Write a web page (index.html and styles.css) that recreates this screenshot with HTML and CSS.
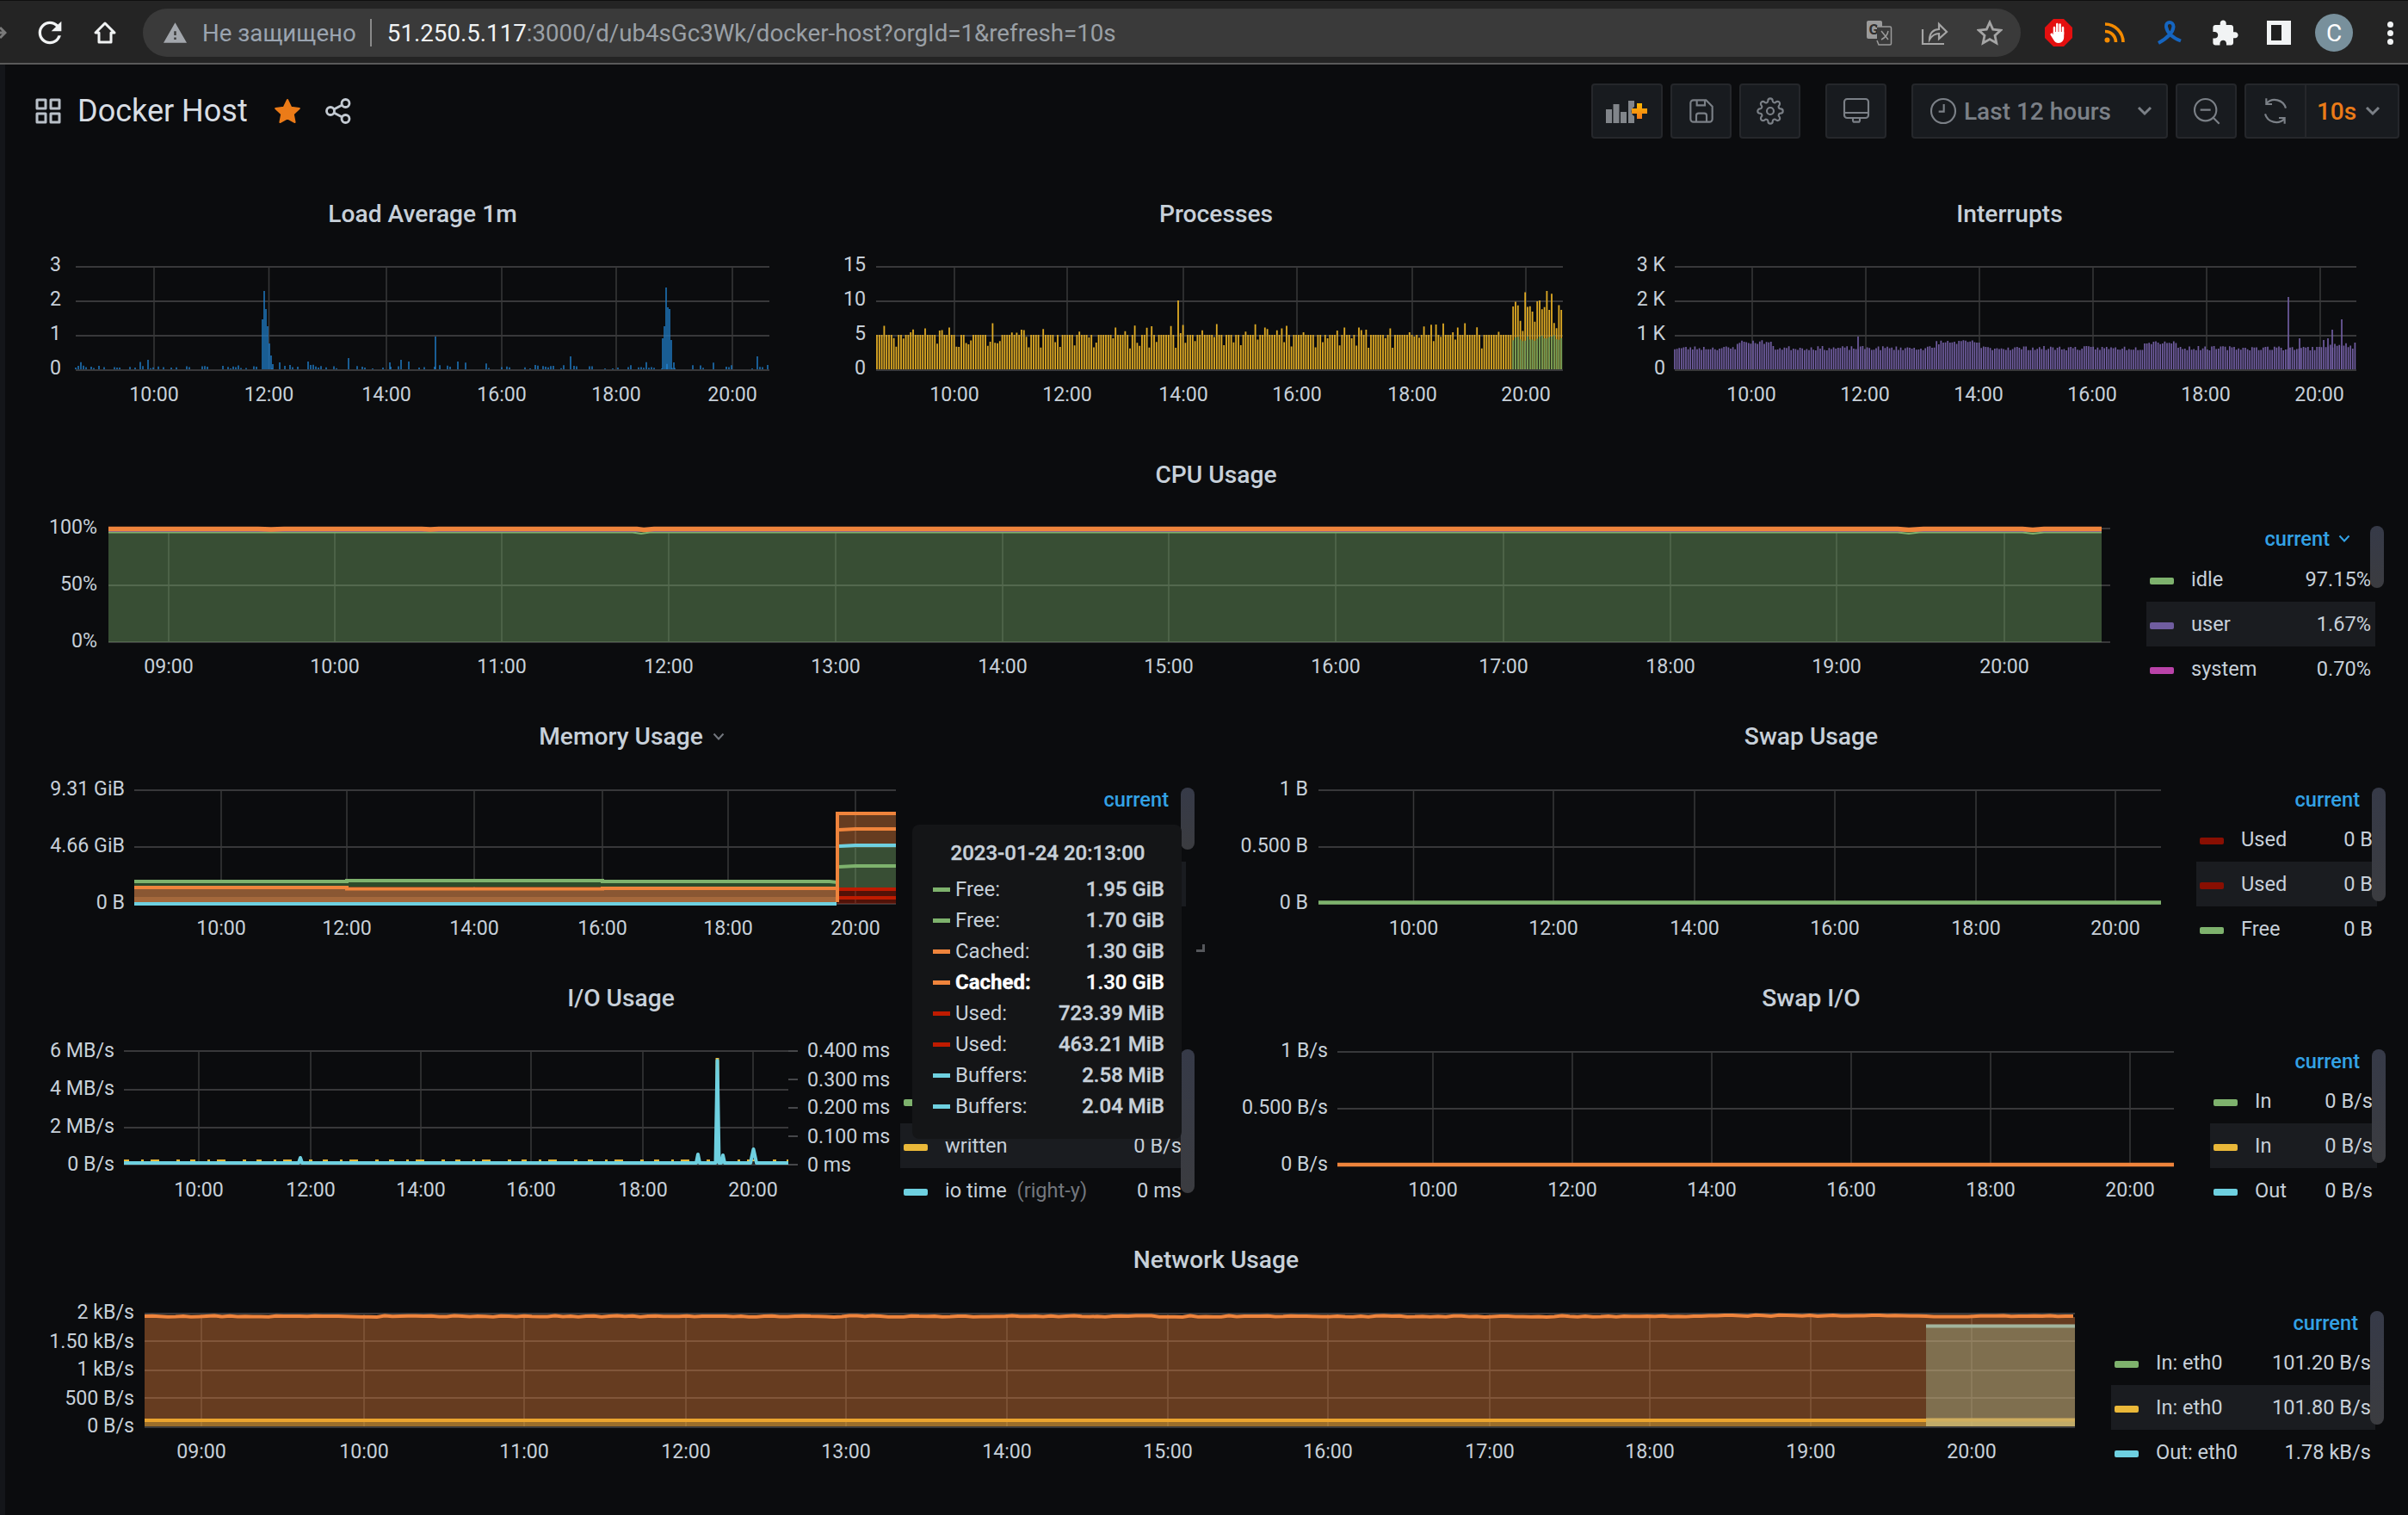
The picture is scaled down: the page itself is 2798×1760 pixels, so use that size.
FILE: index.html
```html
<!DOCTYPE html>
<html lang="ru">
<head>
<meta charset="utf-8">
<title>Docker Host</title>
<link rel="stylesheet" href="styles.css">
</head>
<body>
<div class="browser">
  <div class="browser-nav">
    <svg class="ico-forward" width="8" height="24" viewBox="0 25 8 24"><path d="M-6 37H5M0 31l6 6-6 6" fill="none" stroke="#7a7a7a" stroke-width="3"/></svg>
    <svg class="ico-reload" width="40" height="40" viewBox="0 0 24 24"><path fill="#f1f3f4" d="M17.65 6.35A7.958 7.958 0 0 0 12 4c-4.42 0-7.99 3.58-7.99 8s3.57 8 7.99 8c3.73 0 6.84-2.55 7.73-6h-2.08A5.99 5.99 0 0 1 12 18c-3.31 0-6-2.69-6-6s2.69-6 6-6c1.66 0 3.14.69 4.22 1.78L13 11h7V4l-2.35 2.35z"/></svg>
    <svg class="ico-home" width="28" height="28" viewBox="0 0 28 28"><path d="M14 3 3 14h4v11h14V14h4z" fill="none" stroke="#f1f3f4" stroke-width="3" stroke-linejoin="round"/></svg>
  </div>
  <div class="omnibox">
    <svg class="ico-warn" width="27" height="24" viewBox="1 2 22 19"><path fill="#a3a7ad" d="M1 21h22L12 2 1 21zm12-3h-2v-2h2v2zm0-4h-2v-4h2v4z"/></svg>
    <span class="omni-warn">Не защищено</span>
    <span class="omni-sep"></span>
    <span class="omni-url"><b>51.250.5.117</b>:3000/d/ub4sGc3Wk/docker-host?orgId=1&amp;refresh=10s</span>
    <span class="omni-actions">
      <svg width="30" height="30" viewBox="0 0 30 30"><rect x="0" y="1" width="18" height="21" rx="2" fill="#9b9b9b"/><text class="glyph-g" x="2.5" y="17">G</text><path d="M12 8h15a1.5 1.5 0 0 1 1.5 1.5v18a1.5 1.5 0 0 1-1.500 1.500H14l-2-5" fill="#3a3a3a" stroke="#9b9b9b" stroke-width="1.500"/><path d="M17 13l8 10M25 13c-1 5-4 8-8 10" fill="none" stroke="#9b9b9b" stroke-width="1.500"/></svg>
      <svg width="32" height="30" viewBox="0 0 32 30"><path d="M2 11v17h25M10 23c0-8 5-12 11-12V5l9 9-9 8v-6c-5 0-8 2-11 7z" fill="none" stroke="#a5a5a5" stroke-width="2.200" stroke-linejoin="miter"/></svg>
      <svg width="30" height="30" viewBox="0 0 30 30"><path d="M15 3l3.700 8.200 8.900 1-6.600 6 1.800 8.800L15 22.500 7.200 27l1.800-8.800-6.600-6 8.900-1z" fill="none" stroke="#a5a5a5" stroke-width="2.800"/></svg>
    </span>
  </div>
  <div class="browser-ext">
    <svg class="ext-a" width="32" height="32" viewBox="0 0 32 32"><path fill="#e40f0f" d="M10 0h12l10 10v12L22 32H10L0 22V10z"/><path fill="none" stroke="#fff" stroke-width="2.500" stroke-linecap="round" d="M11 18V10M14.300 16V6M17.600 16V6.500M21 18V10"/><path fill="#fff" d="M9.800 15H22.200V21C22.200 25 19.500 28 16 28 13 28 11.500 26.500 10 24L6.500 18.500C6 17 8 15.800 9 17L10 18.500z"/></svg>
    <svg class="ext-b" width="24" height="24" viewBox="0 0 24 24"><circle cx="3.500" cy="20.500" r="3" fill="#f58b00"/><path d="M1 10.500c7 0 12.500 5.500 12.500 12.500M1 2c11.500 0 21 9.500 21 21" fill="none" stroke="#f58b00" stroke-width="3.600"/></svg>
    <svg class="ext-c" width="32" height="28" viewBox="0 0 32 28"><path d="M3 26C12 21 20 14 20.500 7 20.500 3.500 18 2 16 2 14 2 11.500 3.500 12 7 13 14 20 20 29 23.500" fill="none" stroke="#1565c0" stroke-width="4"/></svg>
    <svg class="ext-d" width="32" height="32" viewBox="1 0 23 23"><path fill="#f1f3f4" d="M20.500 11H19V7c0-1.100-.9-2-2-2h-4V3.500C13 2.120 11.880 1 10.500 1S8 2.120 8 3.500V5H4c-1.100 0-1.990.9-1.990 2v3.800H3.500c1.490 0 2.700 1.210 2.700 2.700s-1.210 2.700-2.700 2.700H2V20c0 1.100.9 2 2 2h3.800v-1.500c0-1.490 1.210-2.700 2.700-2.700 1.490 0 2.700 1.210 2.700 2.700V22H17c1.100 0 2-.9 2-2v-4h1.500c1.380 0 2.500-1.120 2.500-2.500S21.880 11 20.500 11z"/></svg>
    <span class="ext-panel"></span>
    <span class="avatar">C</span>
    <span class="kebab"><i></i><i></i><i></i></span>
  </div>
</div>

<div class="page">
  <header class="topbar">
    <div class="top-left">
      <svg class="ico-grid" width="30" height="30" viewBox="0 0 30 30"><path d="M2 2h10v10H2zM18 2h10v10H18zM2 18h10v10H2zM18 18h10v10H18z" fill="none" stroke="#b9c0c8" stroke-width="3" stroke-linejoin="round"/></svg>
      <h1 class="dash-title">Docker Host</h1>
      <svg class="ico-star" width="32" height="30" viewBox="0 0 32 30"><path fill="#eb7b18" stroke="#eb7b18" stroke-linejoin="round" stroke-width="2" d="M16 2l4.200 8.700 9.600 1.300-7 6.600 1.800 9.400L16 23.400 7.400 28l1.800-9.400-7-6.600 9.600-1.300z"/></svg>
      <svg class="ico-share" width="30" height="30" viewBox="0 0 30 30"><g fill="none" stroke="#c3cad2" stroke-width="2.800"><circle cx="23.500" cy="6" r="4.500"/><circle cx="6" cy="15" r="4.500"/><circle cx="23.500" cy="24" r="4.500"/><path d="M10 13l9.500-5M10 17l9.500 5"/></g></svg>
    </div>
    <div class="top-right">
      <button class="tb tb-add"><svg width="50" height="30" viewBox="0 0 50 30"><defs><linearGradient id="plus" x1="0" x2="0" y1="0" y2="1"><stop offset="0" stop-color="#ffb800"/><stop offset="1" stop-color="#f27a1a"/></linearGradient></defs><path fill="#81858a" d="M0 13h7v16H0zM8.500 7h7v22h-7zM17 16h7v13h-7zM26 3h7v7c-4 2-5 8 0 11v8h-7z"/><path fill="url(#plus)" d="M36 6h6v6h6v6h-6v6h-6v-6H30v-6h6z"/></svg></button>
      <button class="tb"><svg class="ti" width="32" height="32" viewBox="0 0 24 24"><path d="M19 21.500H5a2.500 2.500 0 0 1-2.500-2.500V5A2.500 2.500 0 0 1 5 2.500h11L21.500 8v11a2.500 2.500 0 0 1-2.500 2.500zM8 3v4h7V3M7.500 21v-5a2 2 0 0 1 2-2h5a2 2 0 0 1 2 2v5"/></svg></button>
      <button class="tb"><svg class="ti" width="32" height="32" viewBox="0 0 24 24"><circle cx="12" cy="12" r="3"/><path d="M19.400 15a1.650 1.650 0 0 0 .33 1.820l.06.06a2 2 0 0 1 0 2.830 2 2 0 0 1-2.830 0l-.06-.06a1.650 1.650 0 0 0-1.820-.33 1.650 1.650 0 0 0-1 1.510V21a2 2 0 0 1-2 2 2 2 0 0 1-2-2v-.09A1.650 1.650 0 0 0 9 19.400a1.650 1.650 0 0 0-1.820.33l-.06.06a2 2 0 0 1-2.830 0 2 2 0 0 1 0-2.830l.06-.06a1.650 1.650 0 0 0 .33-1.820 1.650 1.650 0 0 0-1.510-1H3a2 2 0 0 1-2-2 2 2 0 0 1 2-2h.09A1.650 1.650 0 0 0 4.600 9a1.650 1.650 0 0 0-.33-1.820l-.06-.06a2 2 0 0 1 0-2.830 2 2 0 0 1 2.830 0l.06.06a1.650 1.650 0 0 0 1.820.33H9a1.650 1.650 0 0 0 1-1.510V3a2 2 0 0 1 2-2 2 2 0 0 1 2 2v.09a1.650 1.650 0 0 0 1 1.510 1.650 1.650 0 0 0 1.820-.33l.06-.06a2 2 0 0 1 2.830 0 2 2 0 0 1 0 2.830l-.06.06a1.650 1.650 0 0 0-.33 1.820V9a1.650 1.650 0 0 0 1.510 1H21a2 2 0 0 1 2 2 2 2 0 0 1-2 2h-.09a1.650 1.650 0 0 0-1.510 1z"/></svg></button>
      <button class="tb tb-gap"><svg class="ti" width="32" height="32" viewBox="0 0 24 24"><rect x="1.500" y="1.500" width="21" height="16.500" rx="2.500"/><path d="M1.500 13.500h21M9 18v2.200a1.200 1.200 0 0 0 1.200 1.300h3.600a1.200 1.200 0 0 0 1.200-1.300V18"/></svg></button>
      <button class="tb tb-range tb-gap"><svg class="ti" width="32" height="32" viewBox="0 0 24 24"><circle cx="12" cy="12" r="10.500"/><path d="M12.500 6v6.500H8"/></svg><span class="range-text">Last 12 hours</span><svg class="chev chev-end" width="18" height="12" viewBox="0 0 18 12"><path d="M2 2l7 7 7-7"/></svg></button>
      <button class="tb"><svg class="ti" width="32" height="32" viewBox="0 0 24 24"><circle cx="11" cy="11" r="9.500"/><path d="M6.500 11h9M18 18l5 5"/></svg></button>
      <div class="tb-split">
        <button class="tb-part"><svg class="ti" width="32" height="32" viewBox="0 0 24 24"><path d="M4 5.500A10 10 0 0 1 21 9.500M20 18.500A10 10 0 0 1 3 14.500M4 1v5h5M20 23v-5h-5"/></svg></button>
        <button class="tb-part tb-refresh"><span class="refresh-text">10s</span><svg class="chev" width="18" height="12" viewBox="0 0 18 12"><path d="M2 2l7 7 7-7"/></svg></button>
      </div>
    </div>
  </header>

  <main class="dashboard">
    <section class="panel span-2">
      <h2 class="panel-title">Load Average 1m</h2>
      <svg class="chart" width="922" height="244" viewBox="30 278 922 244">
        <path class="grid-h" d="M88 310H894M88 350H894M88 390H894M88 430H894"/>
        <path class="grid-v" d="M179 310V430M312.500 310V430M449 310V430M583 310V430M716 310V430M851 310V430"/>
        <path id="load-bars" class="bars-load"/>
        <g class="tick-y"><text x="71" y="315">3</text><text x="71" y="355">2</text><text x="71" y="395">1</text><text x="71" y="435">0</text></g>
        <g class="tick-x"><text x="179" y="466">10:00</text><text x="312.500" y="466">12:00</text><text x="449" y="466">14:00</text><text x="583" y="466">16:00</text><text x="716" y="466">18:00</text><text x="851" y="466">20:00</text></g>
      </svg>
    </section>
    <section class="panel span-2">
      <h2 class="panel-title">Processes</h2>
      <svg class="chart" width="922" height="244" viewBox="952 278 922 244">
        <path class="grid-h" d="M1018 310H1816M1018 350H1816M1018 390H1816M1018 430H1816"/>
        <path class="grid-v" d="M1109 310V430M1240 310V430M1375 310V430M1507 310V430M1641 310V430M1773 310V430"/>
        <path id="proc-bars" class="bars-proc"/>
        <path id="proc-green" class="bars-green"/>
        <g class="tick-y"><text x="1006" y="315">15</text><text x="1006" y="355">10</text><text x="1006" y="395">5</text><text x="1006" y="435">0</text></g>
        <g class="tick-x"><text x="1109" y="466">10:00</text><text x="1240" y="466">12:00</text><text x="1375" y="466">14:00</text><text x="1507" y="466">16:00</text><text x="1641" y="466">18:00</text><text x="1773" y="466">20:00</text></g>
      </svg>
    </section>
    <section class="panel span-2">
      <h2 class="panel-title">Interrupts</h2>
      <svg class="chart" width="922" height="244" viewBox="1874 278 922 244">
        <path class="grid-h" d="M1946 310H2738M1946 350H2738M1946 390H2738M1946 430H2738"/>
        <path class="grid-v" d="M2036 310V430M2168 310V430M2300 310V430M2432 310V430M2564 310V430M2696 310V430"/>
        <path id="irq-bars" class="bars-irq"/>
        <g class="tick-y"><text x="1935" y="315">3 K</text><text x="1935" y="355">2 K</text><text x="1935" y="395">1 K</text><text x="1935" y="435">0</text></g>
        <g class="tick-x"><text x="2035" y="466">10:00</text><text x="2167" y="466">12:00</text><text x="2299" y="466">14:00</text><text x="2431" y="466">16:00</text><text x="2563" y="466">18:00</text><text x="2695" y="466">20:00</text></g>
      </svg>
    </section>

    <section class="panel span-6">
      <h2 class="panel-title">CPU Usage</h2>
      <div class="panel-body">
        <svg class="chart" width="2460" height="244" viewBox="30 581 2460 244">
          <path class="grid-h" d="M126 614H2452M126 680H2452M126 746H2452"/>
          <path class="grid-v" d="M196 613V746M389 613V746M583 613V746M777 613V746M971 613V746M1165 613V746M1358 613V746M1552 613V746M1747 613V746M1941 613V746M2134 613V746M2329 613V746"/>
          <path class="fill-green" d="M126 617H2442V746H126z"/>
          <path class="line-thin-green" d="M126 618.500H735L745 620 755 618.500H2205L2218 620 2230 618.500H2350L2362 620 2375 618.500H2442"/>
          <path class="line-thin-purple" d="M126 617.200H2442"/>
          <path class="line-orange-cpu" d="M126 614.500H300L315 615 330 614.500H490L500 615 510 614.500H740L748 615.500 760 614.500H2205L2218 615.500 2235 614.500H2350L2362 615.500 2375 614.500H2442"/>
          <g class="tick-y"><text x="113" y="620">100%</text><text x="113" y="686">50%</text><text x="113" y="752">0%</text></g>
          <g class="tick-x"><text x="196" y="782">09:00</text><text x="389" y="782">10:00</text><text x="583" y="782">11:00</text><text x="777" y="782">12:00</text><text x="971" y="782">13:00</text><text x="1165" y="782">14:00</text><text x="1358" y="782">15:00</text><text x="1552" y="782">16:00</text><text x="1747" y="782">17:00</text><text x="1941" y="782">18:00</text><text x="2134" y="782">19:00</text><text x="2329" y="782">20:00</text></g>
        </svg>
        <div class="legend legend-cpu">
          <div class="legend-head legend-head-sort">current<svg class="chev-blue" width="14" height="10" viewBox="0 0 14 10"><path d="M1.500 1.500l5.500 6 5.500-6"/></svg></div>
          <div class="legend-row"><i class="sw c-green"></i><span class="lg-name">idle</span><span>97.15%</span></div>
          <div class="legend-row hover"><i class="sw c-purple"></i><span class="lg-name">user</span><span>1.67%</span></div>
          <div class="legend-row"><i class="sw c-magenta"></i><span class="lg-name">system</span><span>0.70%</span></div>
          <span class="scroll scroll-short"></span>
        </div>
      </div>
    </section>

    <section class="panel span-3">
      <h2 class="panel-title">Memory Usage<svg class="title-chev" width="14" height="10" viewBox="0 0 14 10"><path d="M1.500 1.500l5.500 6 5.500-6"/></svg></h2>
      <div class="panel-body">
        <svg class="chart" width="1032" height="244" viewBox="30 885 1032 244">
          <path class="grid-h" d="M156 918H1041M156 984H1041M156 1050H1041"/>
          <path class="grid-v" d="M257 918V1050M403 918V1050M551 918V1050M700 918V1050M846 918V1050M994 918V1050"/>
          <path class="fill-mem-g" d="M156 1025H973V1030H156z"/>
          <path class="fill-mem-o" d="M156 1033H973V1044H156z"/>
          <path class="fill-mem-o2" d="M156 1042H973V1048H156z"/>
          <path class="mem-line-g" d="M156 1024H403V1023H700V1024H964L973 1025"/>
          <path class="mem-line-o" d="M156 1031H403V1032.500H700V1032H973"/>
          <path class="mem-line-c" d="M156 1050H972"/>
          <path class="fill-orange" d="M973 946H1041V982H973z"/>
          <path class="fill-green" d="M973 982H1041V1032H973z"/>
          <path class="fill-red" d="M973 1032H1041V1050H973z"/>
          <path class="mem-line-r" d="M975 1033H1041M975 1043H1041"/>
          <path class="mem-line-g" d="M975 1007L994 1006H1041"/>
          <path class="mem-line-c" d="M975 983L994 982H1041"/>
          <path class="mem-line-o" d="M973 1048V945H1041M975 964L994 963H1041"/>
          <g class="tick-y"><text x="145" y="924">9.31 GiB</text><text x="145" y="990">4.66 GiB</text><text x="145" y="1056">0 B</text></g>
          <g class="tick-x"><text x="257" y="1086">10:00</text><text x="403" y="1086">12:00</text><text x="551" y="1086">14:00</text><text x="700" y="1086">16:00</text><text x="846" y="1086">18:00</text><text x="994" y="1086">20:00</text></g>
        </svg>
        <div class="legend legend-mem">
          <div class="legend-head">current</div>
          <div class="legend-row"></div>
          <div class="legend-row hover"></div>
          <span class="scroll scroll-short"></span>
        </div>
      </div>
      <span class="resize-handle"></span>
      <div class="tooltip">
        <div class="tip-date">2023-01-24 20:13:00</div>
        <div class="tip-row"><i class="tip-sw c-green"></i><span class="tip-name">Free:</span><b>1.95 GiB</b></div>
        <div class="tip-row"><i class="tip-sw c-green"></i><span class="tip-name">Free:</span><b>1.70 GiB</b></div>
        <div class="tip-row"><i class="tip-sw c-orange"></i><span class="tip-name">Cached:</span><b>1.30 GiB</b></div>
        <div class="tip-row active"><i class="tip-sw c-orange"></i><span class="tip-name">Cached:</span><b>1.30 GiB</b></div>
        <div class="tip-row"><i class="tip-sw c-red"></i><span class="tip-name">Used:</span><b>723.39 MiB</b></div>
        <div class="tip-row"><i class="tip-sw c-red"></i><span class="tip-name">Used:</span><b>463.21 MiB</b></div>
        <div class="tip-row"><i class="tip-sw c-cyan"></i><span class="tip-name">Buffers:</span><b>2.58 MiB</b></div>
        <div class="tip-row"><i class="tip-sw c-cyan"></i><span class="tip-name">Buffers:</span><b>2.04 MiB</b></div>
      </div>
    </section>
    <section class="panel span-3">
      <h2 class="panel-title">Swap Usage</h2>
      <div class="panel-body">
        <svg class="chart" width="1139" height="244" viewBox="1413 885 1139 244">
          <path class="grid-h" d="M1532 918H2511M1532 984H2511M1532 1050H2511"/>
          <path class="grid-v" d="M1642.500 918V1050M1805 918V1050M1969 918V1050M2132 918V1050M2296 918V1050M2458 918V1050"/>
          <path class="line-flat-green" d="M1532 1048.500H2511"/>
          <g class="tick-y"><text x="1520" y="924">1 B</text><text x="1520" y="990">0.500 B</text><text x="1520" y="1056">0 B</text></g>
          <g class="tick-x"><text x="1642.500" y="1086">10:00</text><text x="1805" y="1086">12:00</text><text x="1969" y="1086">14:00</text><text x="2132" y="1086">16:00</text><text x="2296" y="1086">18:00</text><text x="2458" y="1086">20:00</text></g>
        </svg>
        <div class="legend legend-swap">
          <div class="legend-head">current</div>
          <div class="legend-row"><i class="sw c-darkred"></i><span class="lg-name">Used</span><span>0 B</span></div>
          <div class="legend-row hover"><i class="sw c-darkred"></i><span class="lg-name">Used</span><span>0 B</span></div>
          <div class="legend-row"><i class="sw c-green"></i><span class="lg-name">Free</span><span>0 B</span></div>
          <span class="scroll scroll-mid"></span>
        </div>
      </div>
    </section>

    <section class="panel span-3">
      <h2 class="panel-title">I/O Usage</h2>
      <div class="panel-body">
        <svg class="chart" width="1016" height="244" viewBox="30 1189 1016 244">
          <path class="grid-h" d="M144 1221H916M144 1266H916M144 1310H916M144 1353H916"/>
          <path class="grid-v" d="M231 1221V1353M361 1221V1353M489 1221V1353M617 1221V1353M747 1221V1353M875 1221V1353"/>
          <path class="axis-tick" d="M916 1221H927M916 1254H927M916 1287H927M916 1320H927M916 1353H927"/>
          <path class="io-yellow" d="M144 1348H916"/>
          <path class="io-spike-y" d="M833.500 1351V1229"/>
          <path class="io-cyan" d="M144 1351H347L349 1345 351 1351H809L811 1341 813 1351H831.500L833.500 1232 835.500 1351H838L840 1342 842 1351H872L875.500 1335 879 1351H916"/>
          <g class="tick-y"><text x="133" y="1228">6 MB/s</text><text x="133" y="1272">4 MB/s</text><text x="133" y="1316">2 MB/s</text><text x="133" y="1360">0 B/s</text></g>
          <g class="tick-left"><text x="938" y="1228">0.400 ms</text><text x="938" y="1262">0.300 ms</text><text x="938" y="1294">0.200 ms</text><text x="938" y="1328">0.100 ms</text><text x="938" y="1361">0 ms</text></g>
          <g class="tick-x"><text x="231" y="1390">10:00</text><text x="361" y="1390">12:00</text><text x="489" y="1390">14:00</text><text x="617" y="1390">16:00</text><text x="747" y="1390">18:00</text><text x="875" y="1390">20:00</text></g>
        </svg>
        <div class="legend legend-io">
          <div class="legend-head"></div>
          <div class="legend-row"><i class="sw c-green"></i></div>
          <div class="legend-row hover"><i class="sw c-yellow"></i><span class="lg-name">written</span><span>0 B/s</span></div>
          <div class="legend-row"><i class="sw c-cyan"></i><span class="lg-name">io time <em class="axis-note">(right-y)</em></span><span>0 ms</span></div>
          <span class="scroll scroll-long"></span>
        </div>
      </div>
    </section>
    <section class="panel span-3">
      <h2 class="panel-title">Swap I/O</h2>
      <div class="panel-body">
        <svg class="chart" width="1155" height="244" viewBox="1413 1189 1155 244">
          <path class="grid-h" d="M1554 1222H2526M1554 1288H2526M1554 1353H2526"/>
          <path class="grid-v" d="M1665 1222V1353M1827 1222V1353M1989 1222V1353M2151 1222V1353M2313 1222V1353M2475 1222V1353"/>
          <path class="line-flat-orange" d="M1554 1353H2526"/>
          <g class="tick-y"><text x="1543" y="1228">1 B/s</text><text x="1543" y="1294">0.500 B/s</text><text x="1543" y="1360">0 B/s</text></g>
          <g class="tick-x"><text x="1665" y="1390">10:00</text><text x="1827" y="1390">12:00</text><text x="1989" y="1390">14:00</text><text x="2151" y="1390">16:00</text><text x="2313" y="1390">18:00</text><text x="2475" y="1390">20:00</text></g>
        </svg>
        <div class="legend legend-swapio">
          <div class="legend-head">current</div>
          <div class="legend-row"><i class="sw c-green"></i><span class="lg-name">In</span><span>0 B/s</span></div>
          <div class="legend-row hover"><i class="sw c-yellow"></i><span class="lg-name">In</span><span>0 B/s</span></div>
          <div class="legend-row"><i class="sw c-cyan"></i><span class="lg-name">Out</span><span>0 B/s</span></div>
          <span class="scroll scroll-mid"></span>
        </div>
      </div>
    </section>

    <section class="panel span-6">
      <h2 class="panel-title">Network Usage</h2>
      <div class="panel-body">
        <svg class="chart" width="2423" height="244" viewBox="30 1493 2423 244">
          <path class="grid-h" d="M168 1526H2411M168 1558H2411M168 1592H2411M168 1624H2411M168 1658H2411"/>
          <path class="grid-v" d="M234 1525V1658M423 1525V1658M609 1525V1658M797 1525V1658M983 1525V1658M1170 1525V1658M1357 1525V1658M1543 1525V1658M1731 1525V1658M1917 1525V1658M2104 1525V1658M2291 1525V1658"/>
          <path class="fill-orange" d="M168 1530H2411V1657H168z"/>
          <path class="fill-yellow" d="M168 1650H2411V1657H168z"/>
          <path class="fill-net-hi" d="M2238 1540H2411V1657H2238z"/>
          <path class="fill-net-hi2" d="M2238 1649H2411V1657H2238z"/>
          <path class="net-line-g" d="M2238 1540.500H2411"/>
          <path id="net-top" class="net-line-o"/>
          <path class="net-line-y" d="M168 1650H2238"/>
          <path class="net-line-hy" d="M2238 1649.500H2411"/>
          <g class="tick-y"><text x="156" y="1532">2 kB/s</text><text x="156" y="1566">1.50 kB/s</text><text x="156" y="1598">1 kB/s</text><text x="156" y="1632">500 B/s</text><text x="156" y="1664">0 B/s</text></g>
          <g class="tick-x"><text x="234" y="1694">09:00</text><text x="423" y="1694">10:00</text><text x="609" y="1694">11:00</text><text x="797" y="1694">12:00</text><text x="983" y="1694">13:00</text><text x="1170" y="1694">14:00</text><text x="1357" y="1694">15:00</text><text x="1543" y="1694">16:00</text><text x="1731" y="1694">17:00</text><text x="1917" y="1694">18:00</text><text x="2104" y="1694">19:00</text><text x="2291" y="1694">20:00</text></g>
        </svg>
        <div class="legend legend-net">
          <div class="legend-head">current</div>
          <div class="legend-row"><i class="sw c-green"></i><span class="lg-name">In: eth0</span><span>101.20 B/s</span></div>
          <div class="legend-row hover"><i class="sw c-yellow"></i><span class="lg-name">In: eth0</span><span>101.80 B/s</span></div>
          <div class="legend-row"><i class="sw c-cyan"></i><span class="lg-name">Out: eth0</span><span>1.78 kB/s</span></div>
          <span class="scroll scroll-mid"></span>
        </div>
      </div>
    </section>
  </main>
</div>
<script src="charts.js"></script>
</body>
</html>
```
FILE: styles.css
```css
* { box-sizing: border-box; }
html, body { margin: 0; height: 100%; }
body {
  width: 2798px;
  height: 1760px;
  overflow: hidden;
  background: #0b0c0e;
  color: #c7d0d9;
  font-family: Roboto, "Noto Sans", sans-serif;
}

/* browser chrome */
.browser {
  display: flex;
  align-items: center;
  height: 75px;
  padding-top: 2px;
  background: #242424;
  border-top: 1px solid #101010;
  border-bottom: 2px solid #5a5a5a;
}
.browser-nav { display: flex; align-items: center; width: 166px; height: 56px; }
.ico-forward { margin-right: 30px; }
.ico-home { margin-left: 30px; }
.omnibox {
  display: flex;
  align-items: center;
  width: 2182px;
  height: 56px;
  padding-left: 24px;
  background: #3a3a3a;
  border-radius: 28px;
}
.omni-warn { margin-left: 18px; font-size: 27.7px; color: #9aa4b0; white-space: nowrap; }
.omni-sep { width: 2px; height: 32px; margin: 0 18px 0 16px; background: #8a8a8a; }
.omni-url { font-size: 27.7px; color: #9aa0a6; white-space: nowrap; flex: 1; }
.omni-url b { font-weight: 400; color: #f1f3f4; }
.omni-actions { display: flex; align-items: center; gap: 33px; padding-right: 21px; }
.glyph-g { font: 700 17px Roboto, sans-serif; fill: #2e2e2e; }
.browser-ext { display: flex; align-items: center; height: 56px; padding-left: 28px; }
.ext-b { margin-left: 37px; }
.ext-c { margin-left: 36px; }
.ext-d { margin-left: 33px; }
.ext-panel {
  width: 28px; height: 28px; margin-left: 32px;
  border: 5px solid #f1f3f4; border-right-width: 11px;
  background: #1f1f1f;
}
.avatar {
  display: flex; align-items: center; justify-content: center;
  width: 44px; height: 44px; margin-left: 28px;
  border-radius: 50%; background: #78909c; color: #fff; font-size: 28px;
}
.kebab { display: flex; flex-direction: column; gap: 3px; margin-left: 40px; }
.kebab i { display: block; width: 7px; height: 7px; border-radius: 50%; background: #f1f3f4; }

/* page */
.page {
  height: 1685px;
  border-left: 6px solid #14161a;
  padding: 0 2px 0 24px;
}
.topbar {
  display: flex;
  justify-content: space-between;
  height: 143px;
  padding-top: 22px;
}
.top-left { display: flex; align-items: center; height: 64px; padding-left: 11px; }
.dash-title { margin: 0 0 0 19px; font-size: 36px; font-weight: 400; color: #d8dde3; }
.ico-star { margin-left: 30px; }
.ico-share { margin-left: 28px; }
.top-right { display: flex; align-items: flex-start; gap: 9px; padding-right: 8px; }
.tb, .tb-split {
  display: flex; align-items: center; justify-content: center;
  width: 71px; height: 64px; padding: 0;
  background: #181b1f;
  border: 2px solid #25272b;
  border-radius: 4px;
}
.tb-add { width: 83px; }
.tb-gap { margin-left: 20px; }
.tb-range { width: 298px; justify-content: flex-start; padding: 0 16px 0 19px; }
.range-text { margin-left: 8px; font-size: 28px; font-weight: 500; color: #7b8087; font-family: Roboto, sans-serif; }
.chev { margin-left: 19px; fill: none; stroke: #7b8087; stroke-width: 3; }
.chev-end { margin-left: auto; }
.ti { fill: none; stroke: #7b8087; stroke-width: 1.600; }
.tb-split { width: 180px; }
.tb-part {
  display: flex; align-items: center; justify-content: center;
  height: 60px; padding: 0; background: none; border: 0;
}
.tb-part:first-child { width: 70px; border-right: 2px solid #25272b; }
.tb-refresh { flex: 1; padding-right: 8px; }
.refresh-text { font-size: 28px; font-weight: 500; color: #eb7b18; font-family: Roboto, sans-serif; }
.tb-refresh .chev { margin-left: 10px; }

/* dashboard */
.dashboard {
  display: grid;
  grid-template-columns: repeat(6, 461px);
  grid-template-rows: 303px 304px 304px 304px 327px;
}
.panel { position: relative; min-width: 0; }
.span-2 { grid-column: span 2; }
.span-3 { grid-column: span 3; }
.span-6 { grid-column: span 6; }
.panel-title {
  position: relative;
  height: 60px; margin: 0;
  font-size: 28.2px; font-weight: 500; line-height: 61px;
  text-align: center; color: #c7d0d9;
}
.title-chev { position: absolute; margin: 26px 0 0 11px; fill: none; stroke: #73777e; stroke-width: 2; }
.panel-body { display: flex; align-items: flex-start; }
.chart { display: block; flex: none; overflow: visible; }
.chart + .legend { flex: none; }

.chart text { font-family: Roboto, sans-serif; font-size: 23.2px; fill: #c7d0d9; }
.tick-y { text-anchor: end; }
.tick-x { text-anchor: middle; }
.tick-left { text-anchor: start; }

.grid-h { fill: none; stroke: #38383a; stroke-width: 2; }
.grid-v { fill: none; stroke: #38383a; stroke-width: 1.500; }
.axis-tick { fill: none; stroke: #46474a; stroke-width: 2; }
.fill-green { fill: #7eb26d; fill-opacity: .4; }
.fill-orange { fill: #ef843c; fill-opacity: .4; }
.fill-red { fill: #bf1b00; fill-opacity: .4; }
.fill-yellow { fill: #eab839; fill-opacity: .4; }
.fill-mem-g { fill: #2d4a2a; }
.fill-mem-o { fill: #8a5733; }
.fill-mem-o2 { fill: #a4683c; }
.fill-net-hi { fill: #a9c29f; fill-opacity: .38; }
.fill-net-hi2 { fill: #e8cf7e; fill-opacity: .45; }
.line-thin-green { fill: none; stroke: #7eb26d; stroke-width: 2; }
.line-thin-purple { fill: none; stroke: #705da0; stroke-width: 1.500; }
.line-orange-cpu { fill: none; stroke: #ef843c; stroke-width: 5.500; }
.mem-line-g, .mem-line-c, .mem-line-o, .mem-line-r { fill: none; stroke-width: 4; }
.mem-line-g { stroke: #7eb26d; }
.mem-line-c { stroke: #6ed0e0; }
.mem-line-o { stroke: #ef843c; }
.mem-line-r { stroke: #bf1b00; }
.line-flat-green { fill: none; stroke: #7eb26d; stroke-width: 4.500; }
.line-flat-orange { fill: none; stroke: #ef843c; stroke-width: 4.500; }
.io-yellow { fill: none; stroke: #eab839; stroke-width: 2; stroke-dasharray: 6 14 3 8 10 20 4 12; }
.io-spike-y { fill: none; stroke: #eab839; stroke-width: 4; }
.io-cyan { fill: none; stroke: #6ed0e0; stroke-width: 4; stroke-linejoin: round; }
.net-line-g { fill: none; stroke: #a3b49d; stroke-width: 4; }
.net-line-o { fill: none; stroke: #ef843c; stroke-width: 4; }
.net-line-y { fill: none; stroke: #eba42e; stroke-width: 4; }
.net-line-hy { fill: none; stroke: #cfae5f; stroke-width: 4; }
.bars-load { fill: none; stroke: #1f78c1; stroke-width: 1.500; }
.bars-proc { fill: none; stroke: #e0ab24; stroke-width: 1.800; }
.bars-green { fill: none; stroke: #6f9c58; stroke-width: 1.800; }
.bars-irq { fill: none; stroke: #705da0; stroke-width: 1.700; }

/* legends */
.legend { position: relative; padding-top: 24px; font-size: 23.6px; color: #c7d0d9; }
.legend-head {
  display: flex; align-items: center; justify-content: flex-end;
  height: 40px; padding-right: 20px;
  font-weight: 500; color: #33a2e5;
}
.legend-head-sort { height: 42px; padding-right: 29px; }
.chev-blue { margin-left: 10px; fill: none; stroke: #33a2e5; stroke-width: 2; }
.legend-row { display: flex; align-items: center; height: 52px; padding: 0 5px 0 4px; white-space: nowrap; }
.legend-row.hover { background: #1a1c20; }
.sw { display: block; flex: none; width: 28px; height: 8px; margin: 3px 20px 0 0; border-radius: 2px; }
.lg-name { flex: 1; }
.axis-note { font-style: normal; color: #73777e; margin-left: 6px; }
.c-green { background: #7eb26d; }
.c-purple { background: #705da0; }
.c-magenta { background: #ba43a9; }
.c-darkred { background: #890f02; }
.c-yellow { background: #eab839; }
.c-cyan { background: #6ed0e0; }
.c-orange { background: #ef843c; }
.c-red { background: #bf1b00; }
.legend-cpu { width: 266px; margin-left: 4px; }
.legend-mem { width: 316px; }
.legend-swap { width: 210px; }
.legend-io { width: 332px; }
.legend-swapio { width: 194px; }
.legend-net { width: 307px; }
.scroll {
  position: absolute; top: 30px; right: -10px;
  width: 16px;
  border-radius: 8px;
  background: linear-gradient(#363a48, #3b3c40);
}
.scroll-short { height: 72px; }
.scroll-mid { height: 132px; }
.scroll-long { height: 167px; }

/* tooltip */
.tooltip {
  position: absolute; left: 1030px; top: 133px; z-index: 5;
  width: 313px; height: 365px;
  padding: 15px 20px 0 24px;
  background: #141517;
  border-radius: 8px;
}
.tip-date { height: 36px; margin-bottom: 6px; padding-right: 2px; font-size: 24px; font-weight: 500; line-height: 36px; text-align: center; color: #c7d0d9; -webkit-text-stroke: .35px #c7d0d9; }
.tip-row { display: flex; align-items: center; height: 36px; font-size: 24px; color: #c7d0d9; white-space: nowrap; }
.tip-sw { display: block; flex: none; width: 20px; height: 5px; margin-right: 6px; }
.tip-name { flex: 1; }
.tip-row b { font-weight: 500; -webkit-text-stroke: .35px #c7d0d9; }
.tip-row.active, .tip-row.active b { color: #fff; -webkit-text-stroke: .35px #fff; }
.tip-row.active .tip-name { font-weight: 700; }
.resize-handle {
  position: absolute; left: 1360px; top: 272px;
  width: 10px; height: 9px;
  border-right: 3px solid #55575b; border-bottom: 3px solid #55575b;
}
```
FILE: charts.js
```js
// Seeded sample data for the dense bar series; the rest of each chart is static markup.
function rng(seed) {
  var s = seed;
  return function () {
    s = (s * 1664525 + 1013904223) % 4294967296;
    return s / 4294967296;
  };
}
function bars(points, base) {
  return points.map(function (p) { return 'M' + p[0].toFixed(1) + ' ' + base + 'V' + (base - p[1]).toFixed(1); }).join('');
}

(function load() {
  var r = rng(11), pts = [];
  for (var x = 88; x < 894; x += 3) {
    var v = r();
    if (v < 0.45) pts.push([x, 1 + r() * (r() < 0.15 ? 10 : 4)]);
  }
  [[305, 58], [307, 91], [309, 70], [311, 50], [313, 30], [315, 16], [317, 6],
   [770, 36], [772, 50], [774, 95], [776, 72], [778, 70], [780, 34], [783, 8],
   [506, 38], [663, 15], [453, 8], [405, 13], [880, 15]].forEach(function (p) { pts.push(p); });
  document.getElementById('load-bars').setAttribute('d', bars(pts, 429));
})();

(function proc() {
  var r = rng(5), pts = [], green = [];
  for (var x = 1019; x < 1816; x += 2.8) {
    var v = r(), h;
    if (Math.abs(x - 1368) < 1.4) h = 80;
    else if (x >= 1757) {
      h = 66 + r() * 14;
      if (v > 0.86) h = 82 + r() * 14;
      if (v < 0.12) h = 42 + r() * 16;
      green.push([x, 32 + r() * 8]);
    } else {
      h = 40;
      if (v < 0.22) h = 24 + r() * 14;
      else if (v > 0.82) h = 42 + r() * 12;
    }
    pts.push([x, h]);
  }
  document.getElementById('proc-bars').setAttribute('d', bars(pts, 429));
  document.getElementById('proc-green').setAttribute('d', bars(green, 429));
})();

(function irq() {
  var r = rng(23), pts = [];
  function bump(x, a, b) { return x > a && x < b ? 7 : 0; }
  for (var x = 1946; x < 2738; x += 2.6) {
    var h = 22 + r() * 5 + bump(x, 2018, 2060) + bump(x, 2250, 2300) + bump(x, 2490, 2530) + (x > 2690 ? 5 * r() : 0);
    pts.push([x, h]);
  }
  [[2659, 84], [2721, 58], [2710, 46], [2159, 38], [2672, 36], [2705, 36], [2700, 34]].forEach(function (p) { pts.push(p); });
  document.getElementById('irq-bars').setAttribute('d', bars(pts, 429));
})();

(function netTop() {
  var r = rng(3), d = 'M168 1529', x = 168;
  while (x < 2402) {
    x += 9;
    d += 'L' + x + ' ' + (1528.5 + r() * 1.4 - (x > 1980 && x < 2238 ? 0.8 : 0)).toFixed(1);
  }
  document.getElementById('net-top').setAttribute('d', d);
})();
```
